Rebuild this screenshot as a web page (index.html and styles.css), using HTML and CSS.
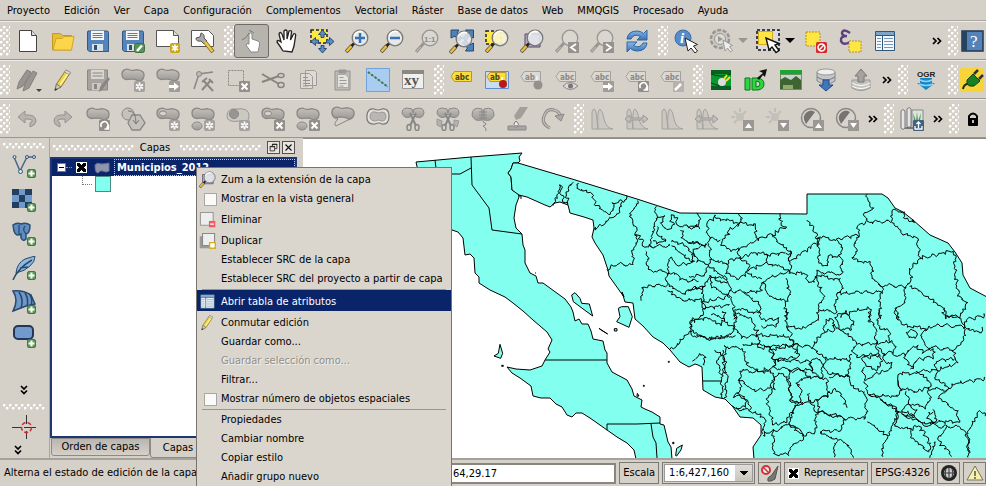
FILE: index.html
```
<!DOCTYPE html>
<html lang="es">
<head>
<meta charset="utf-8">
<title>QGIS</title>
<link rel="stylesheet" href="styles.css">
<script src="boundaries.js" defer></script>
</head>
<body>
<svg class="defs" aria-hidden="true">
  <defs>
    <linearGradient id="shade" x1="0" y1="0" x2="0" y2="1"><stop offset="0" stop-color="#c4c1bc"/><stop offset="1" stop-color="#9d9a96"/></linearGradient>
    <linearGradient id="blue" x1="0" y1="0" x2="0" y2="1"><stop offset="0" stop-color="#8db8e6"/><stop offset="1" stop-color="#3672b5"/></linearGradient>
  </defs>
  <symbol id="blob" viewBox="0 0 24 24"><path d="M1 6C1 1 6 .5 9 2c3 1 5-.5 8-.2 4 .3 6.500 3 6 6-.5 4-3 6-7 4.500C13 10.500 10 11 6 11.500 3 11.500 1 9.500 1 6z" fill="url(#shade)" stroke="#8b8884" stroke-width="1.300"/></symbol>
  <symbol id="b-star" viewBox="0 0 24 24"><rect x="13" y="13" width="11" height="11" rx="2" fill="#a5a29e"/><path d="M18.500 14.500v8M15 16.500l7 4M15 20.500l7-4" stroke="#fff" stroke-width="1.800"/><circle cx="18.500" cy="18.500" r="1" fill="#a5a29e"/></symbol>
  <symbol id="b-x" viewBox="0 0 24 24"><rect x="13" y="13" width="11" height="11" rx="1" fill="#93908c"/><path d="M15.500 15.500l6 6M21.500 15.500l-6 6" stroke="#fff" stroke-width="2"/></symbol>
  <symbol id="b-arrow" viewBox="0 0 24 24"><rect x="13" y="13" width="11" height="11" rx="1" fill="#a09d99"/><path d="M13 17h5v-2.500l5 4-5 4V20h-5z" fill="#fff"/></symbol>
  <symbol id="b-turn" viewBox="0 0 24 24"><rect x="13" y="13" width="11" height="11" rx="1" fill="#908d89"/><path d="M15.500 20a3.500 3.500 0 1 1 5 1M22.500 18v4h-4" fill="none" stroke="#fff" stroke-width="1.600"/></symbol>
  <symbol id="b-plus" viewBox="0 0 24 24"><rect x="15.500" y="15.500" width="8" height="8" rx="1.500" fill="#5c9a57" stroke="#3c7b3c"/><path d="M19.500 16.500v6M16.500 19.500h6" stroke="#fff" stroke-width="2"/></symbol>
  <symbol id="lens" viewBox="0 0 24 24"><path d="M1 23l6-6.500" stroke="#555" stroke-width="4"/><path d="M1.500 22.500l5-5.500" stroke="#f0bf2c" stroke-width="2.500"/><path d="M6.500 17l3-3" stroke="#222" stroke-width="2.500"/><circle cx="15" cy="9" r="7.800" fill="#e9edf0" fill-opacity=".82" stroke="#777" stroke-width="1.300"/><path d="M9 7a6.500 6.500 0 0 1 9-4" fill="none" stroke="#fff" stroke-width="1.500"/></symbol>
  <symbol id="glens" viewBox="0 0 24 24"><path d="M1 23l8-9" stroke="#999692" stroke-width="3"/><path d="M1.500 22.500l4-4.500" stroke="#cbc7c0"/><circle cx="15" cy="9" r="7.800" fill="#dad7d1" stroke="#999692" stroke-width="1.300"/></symbol>
  <symbol id="cursor" viewBox="0 0 24 24"><path d="M11 9l3 13 3-3 4 5 2.500-2-4-5 4-1.500z" fill="#fff" stroke="#222"/></symbol>
  <symbol id="disk" viewBox="0 0 24 24"><path d="M2 2h19a1.500 1.500 0 0 1 1.500 1.500v19H3.500L1.500 21V3z" fill="#5583bb" stroke="#34587f"/><path d="M5 2h13v9H5z" fill="#f6f6f4"/><path d="M6.500 4.500h10M6.500 6.500h10M6.500 8.500h10" stroke="#777"/><path d="M6 15h11v7H6z" fill="#d8e0e8"/><path d="M8 16h3v5H8z" fill="#2b5277"/></symbol>
  <symbol id="gdisk" viewBox="0 0 24 24"><path d="M1.500 2h20v20h-20z" fill="#a7a4a0" stroke="#888"/><path d="M5 2h13v9H5z" fill="#d9d6d0"/><path d="M6.500 5h10M6.500 8h10" stroke="#888"/><path d="M6 15h9v7H6z" fill="#ccc8c2"/><path d="M8 16h3v5H8zM13 24l1-5 8-10 2 2-8 11z" fill="#8a8783"/></symbol>
  <symbol id="tag" viewBox="0 0 24 24"><path d="M1 8.500L4.500 3.500h16v10h-16z" fill="#dcd9d3" stroke="#a4a19d"/></symbol>
  <symbol id="hist" viewBox="0 0 24 24"><path d="M2 22V5q2-6 4 0l2 17zM8 22q-1-20 2-20 3 2 4 10 2 9 9 10z" fill="#cbc8c2" stroke="#a5a29e"/></symbol>
  <symbol id="scis" viewBox="0 0 24 24"><path d="M11 2Q1-1 1 6q2 6 8 4l3-3 3 3q7 2 8-4 0-7-10-4l-1 4z" fill="url(#shade)" stroke="#888"/><path d="M9 6l6 13M15 6L9 19" stroke="#888" stroke-width="2"/><ellipse cx="8" cy="20.500" rx="2" ry="3" fill="none" stroke="#888" stroke-width="1.500"/><ellipse cx="16" cy="20.500" rx="2" ry="3" fill="none" stroke="#888" stroke-width="1.500"/></symbol>
  <symbol id="table" viewBox="0 0 24 24"><path d="M2.500 2.500h19v19h-19z" fill="#f6f9fb" stroke="#31577c"/><path d="M3 3h18v3H3z" fill="#7ea4c9"/><path d="M3 6.500h18M9.500 6v15" stroke="#31577c"/><path d="M4 9.500h4M4 12.500h4M4 15.500h4M4 18.500h4M11 9.500h9M11 12.500h9M11 15.500h9M11 18.500h9" stroke="#7397b8"/></symbol>
  <symbol id="pencil" viewBox="0 0 24 24"><path d="M4 22l1.500-6L15 2l4.500 2.500L10 19z" fill="#ecd445" stroke="#8c7a28"/><path d="M9 17l9-13" stroke="#fff4a0" stroke-width="1.500"/><path d="M15 2l4.500 2.500-1.500 2-4.500-2.500z" fill="#ddd" stroke="#999"/><path d="M4 22l1.500-6L10 19z" fill="#d5ccb5" stroke="#777"/><path d="M3.500 23l1-3 2 1.500z" fill="#333"/></symbol>
  <symbol id="chev" viewBox="0 0 10 8"><path d="M1 1l3 3-3 3M5.500 1l3 3-3 3" fill="none" stroke="#000" stroke-width="1.700"/></symbol>
</svg>

<nav class="menubar" aria-label="Menú principal">
  <button>Proyecto</button><button>Edición</button><button>Ver</button><button>Capa</button><button>Configuración</button><button>Complementos</button><button>Vectorial</button><button>Ráster</button><button>Base de datos</button><button>Web</button><button>MMQGIS</button><button>Procesado</button><button>Ayuda</button>
</nav>

<div class="toolbar">
  <span class="grip"></span>
  <div class="group">
    <button class="tool" aria-label="Nuevo"><svg viewBox="0 0 24 24"><path d="M3.500 1.500h12l5 5v16h-17z" fill="#fff" stroke="#444"/><path d="M15.500 1.500v5h5" fill="#ddd" stroke="#444"/></svg></button>
    <button class="tool" aria-label="Abrir"><svg viewBox="0 0 24 24"><path d="M1.500 21V4.500h8l2 2h9V21z" fill="#e9bd36" stroke="#c79820"/><path d="M2 21L5 9.500h6l2-2h10L20.500 21z" fill="#fbd64b" stroke="#d4a52b"/></svg></button>
    <button class="tool" aria-label="Guardar"><svg viewBox="0 0 24 24"><use href="#disk"/></svg></button>
    <button class="tool" aria-label="Guardar como"><svg viewBox="0 0 24 24"><use href="#disk"/><rect x="13.500" y="14.500" width="10" height="9" rx="2" fill="#559457" stroke="#387139"/><path d="M16 22l5-5.500" stroke="#fff" stroke-width="2.500"/></svg></button>
    <button class="tool" aria-label="Nuevo diseñador"><svg viewBox="0 0 24 24"><path d="M.5 1.500h17l5 5v11H.5z" fill="#fff" stroke="#555"/><path d="M17.500 1.500v5h5" fill="#ddd" stroke="#555"/><rect x="14" y="14" width="10" height="10" rx="2" fill="#d0a313"/><path d="M19 15.500v7M16 17l6 4M16 21l6-4" stroke="#fff" stroke-width="1.700"/></svg></button>
    <button class="tool" aria-label="Administrador de diseñadores"><svg viewBox="0 0 24 24"><path d="M.5 1.500h17l5 5v11H.5z" fill="#fff" stroke="#555"/><path d="M10 4l-1 4-4 1q0 4 5 3l3 3 3-3-3-3q1-4-3-5z" fill="#aaa" stroke="#555"/><path d="M14 13l8 10" stroke="#80651f" stroke-width="4"/><path d="M14 13l7.500 9.500" stroke="#efc84b" stroke-width="2.500"/></svg></button>
  </div>
  <span class="grip"></span>
  <div class="group">
    <button class="tool active" aria-label="Desplazar táctil"><svg viewBox="0 0 24 24"><path d="M9 12V5q1.500-2 3 0v5l6 2q2 1 1.500 4L18 23h-7l-5-7q0-2 3-1z" fill="#fff" stroke="#888"/><path d="M2 11q5-2 7-7m0-3l5 3" fill="none" stroke="#777"/></svg></button>
    <button class="tool" aria-label="Desplazar mapa"><svg viewBox="0 0 24 24"><path d="M8 22q-3-5-6-9 0-3 4 0L4 5q1-3 3 0l2 6V2q2-2 3 0v8l2-8q3-1 2.500 1L15.500 11l3-6q2-1 2.200 1L19 17l-2 6z" fill="#fff" stroke="#222" stroke-width="1.300"/></svg></button>
    <button class="tool" aria-label="Desplazar a selección"><svg viewBox="0 0 24 24"><path d="M1 1h16v13H1z" fill="#ffe743" stroke="#222" stroke-width="1.500" stroke-dasharray="3 2"/><g fill="#5b8dc5" stroke="#294d78"><path d="M12.500 1l4 4.500H14v3h-3v-3H8.500zM12.500 24l4-4.500H14v-3h-3v3H8.500zM1 12.500l4.500-4V11h3v3h-3v2.500zM24 12.500l-4.500-4V11h-3v3h3v2.500z"/></g></svg></button>
    <button class="tool" aria-label="Acercar"><svg viewBox="0 0 24 24"><use href="#lens"/><path d="M15 4v10M10 9h10" stroke="#3972b1" stroke-width="2.500"/></svg></button>
    <button class="tool" aria-label="Alejar"><svg viewBox="0 0 24 24"><use href="#lens"/><path d="M10 9h10" stroke="#3972b1" stroke-width="2.500"/></svg></button>
    <button class="tool" aria-label="Zum nativo"><svg viewBox="0 0 24 24"><use href="#glens"/><text x="9" y="12.500" class="ratio">1:1</text></svg></button>
    <button class="tool" aria-label="Zum general"><svg viewBox="0 0 24 24"><path d="M1 1h8L7 4l5 5-3 3-4-5-4 2zM23.500 1h-8l2 3-5 5 3 3 4-5 4 2zM23.500 22h-8l2-3-5-5 3-3 4 5 4-2z" fill="#4d82bd" stroke="#234a75"/><use href="#lens" x="-1" y="1"/></svg></button>
    <button class="tool" aria-label="Zum a la selección"><svg viewBox="0 0 24 24"><path d="M1 2h15v13H1z" fill="#ffe743" stroke="#222" stroke-width="1.500" stroke-dasharray="3 2"/><use href="#lens"/><circle cx="15" cy="9" r="6" fill="#fff9b8" opacity=".7"/></svg></button>
    <button class="tool" aria-label="Zum a la capa"><svg viewBox="0 0 24 24"><path d="M5 5h15v13H5z" fill="#b6acc6" stroke="#544869"/><use href="#lens"/></svg></button>
    <button class="tool" aria-label="Zum anterior"><svg viewBox="0 0 24 24"><use href="#glens"/><path d="M13 13h11v11H13z" fill="#96938f"/><path d="M21 15l-5 3.500 5 3.500" fill="none" stroke="#fff" stroke-width="1.800"/></svg></button>
    <button class="tool" aria-label="Zum siguiente"><svg viewBox="0 0 24 24"><use href="#glens"/><path d="M13 13h11v11H13z" fill="#96938f"/><path d="M16 15l5 3.500-5 3.500" fill="none" stroke="#fff" stroke-width="1.800"/></svg></button>
    <button class="tool" aria-label="Actualizar"><svg viewBox="0 0 24 24"><path d="M2 10Q3 2 12 2q4 0 6.500 2.500L22 1v10H12l3.500-3.500Q9 4 6 10z" fill="url(#blue)" stroke="#2c66a6"/><path d="M22 14q-1 8-10 8-4 0-6.500-2.500L2 23V13h10l-3.500 3.500Q15 20 18 14z" fill="url(#blue)" stroke="#2c66a6"/></svg></button>
  </div>
  <span class="grip"></span>
  <div class="group">
    <button class="tool" aria-label="Identificar objetos"><svg viewBox="0 0 24 24"><circle cx="9" cy="9" r="8" fill="#568cc9" stroke="#396ca5"/><text x="6" y="14" class="info">i</text><use href="#cursor"/></svg></button>
    <button class="tool" aria-label="Ejecutar acción"><svg viewBox="0 0 24 24"><circle cx="11" cy="10" r="9" fill="#ccc9c3" stroke="#999692" stroke-width="2.500" stroke-dasharray="4 1.600"/><circle cx="11" cy="10" r="5.500" fill="#dedbd5" stroke="#999692"/><path d="M9 7l5 3-5 3z" fill="#999"/><path d="M14 11l2 11 2.500-3 3 4 2-1.500-3-4 3-1z" fill="#eee" stroke="#999"/></svg></button>
    <span class="drop muted"></span>
    <button class="tool" aria-label="Seleccionar objetos"><svg viewBox="0 0 24 24"><path d="M1 1h22v20H1z" fill="#d9dce3" stroke="#111" stroke-width="1.500" stroke-dasharray="3 2"/><path d="M2.500 2.500h14v13h-14z" fill="#ffe743" stroke="#d3aa22"/><path d="M10 9l3 12 3-3 4 5.500 3-2-4-5.500 4-1.500z" fill="#fff" stroke="#111" stroke-width="1.400"/></svg></button>
    <span class="drop"></span>
    <button class="tool" aria-label="Deseleccionar"><svg viewBox="0 0 24 24"><path d="M3 3h14v14H3z" fill="#ffe743" stroke="#b8901c" stroke-dasharray="2 1"/><rect x="13" y="13" width="11" height="11" rx="1.500" fill="#d8282b"/><circle cx="18.500" cy="18.500" r="3.500" fill="none" stroke="#fff" stroke-width="1.500"/><path d="M16 21l5-5" stroke="#fff" stroke-width="1.500"/></svg></button>
    <button class="tool" aria-label="Seleccionar por expresión"><svg viewBox="0 0 24 24"><path d="M12 4Q5-1 4 4q0 3 5 3-7 0-6 5 2 5 9 1" fill="none" stroke="#614080" stroke-width="2.500"/><path d="M11 12h12v11H11z" fill="#ffe743" stroke="#b8901c" stroke-dasharray="2 1"/></svg></button>
    <button class="tool" aria-label="Tabla de atributos"><svg viewBox="0 0 24 24"><use href="#table"/></svg></button>
  </div>
  <div class="group end">
    <button class="more" aria-label="Más"><svg viewBox="0 0 10 8"><use href="#chev"/></svg></button>
    <span class="grip"></span>
    <button class="tool edge" aria-label="Ayuda"><svg viewBox="0 0 24 24"><path d="M2 2h21v20H2z" fill="#5583b8" stroke="#20364e" stroke-width="1.500"/><path d="M2 2h5v20H2z" fill="#26435f"/><text x="10" y="18" class="qmark">?</text></svg></button>
  </div>
</div>

<div class="toolbar">
  <span class="grip"></span>
  <div class="group">
    <button class="tool" aria-label="Ediciones actuales"><svg viewBox="0 0 24 24"><path d="M1 21l2-7L11 2l4 2-8 14zM7 23l2-7L17 3l4 2-8 15z" fill="#999692" stroke="#83807c"/><path d="M20 21h6l-3 3z" fill="#444"/></svg></button>
    <button class="tool" aria-label="Conmutar edición"><svg viewBox="0 0 24 24"><use href="#pencil"/></svg></button>
    <button class="tool" aria-label="Guardar cambios"><svg viewBox="0 0 24 24"><use href="#gdisk"/></svg></button>
    <button class="tool" aria-label="Añadir objeto"><svg viewBox="0 0 24 24"><use href="#blob"/><use href="#b-star"/></svg></button>
    <button class="tool" aria-label="Mover objeto"><svg viewBox="0 0 24 24"><use href="#blob"/><use href="#b-arrow"/></svg></button>
    <button class="tool" aria-label="Herramienta de nodos"><svg viewBox="0 0 24 24"><path d="M3 21L8 6l14-2" fill="none" stroke="#888" stroke-width="1.500"/><circle cx="8" cy="6" r="2.500" fill="#bbb" stroke="#888"/><path d="M11 22l9-10M12 12l10 11M11 14l5-4M18 11l4 4" stroke="#8b8884" stroke-width="2"/></svg></button>
    <button class="tool" aria-label="Borrar lo seleccionado"><svg viewBox="0 0 24 24"><path d="M2.500 2.500h15v15h-15z" fill="none" stroke="#8b8884" stroke-dasharray="2 1"/><use href="#b-x"/></svg></button>
    <button class="tool" aria-label="Cortar"><svg viewBox="0 0 24 24"><path d="M1 6l17 10M1 14l17-6" stroke="#888580" stroke-width="2"/><ellipse cx="20" cy="7.500" rx="3" ry="2" fill="none" stroke="#888580" stroke-width="1.500"/><ellipse cx="20" cy="17" rx="3" ry="2.500" fill="none" stroke="#888580" stroke-width="1.500"/></svg></button>
    <button class="tool" aria-label="Copiar"><svg viewBox="0 0 24 24"><path d="M9.500 2.500h9l2 2v13h-11zM4.500 5.500h9l3 3v12h-12z" fill="#dedbd5" stroke="#a09d99"/><path d="M7 9.500h5M7 12.500h7M7 15.500h7M7 18h5" stroke="#96938f"/></svg></button>
    <button class="tool" aria-label="Pegar"><svg viewBox="0 0 24 24"><path d="M4 3h15v19H4z" fill="#bdb9b3" stroke="#96938f"/><path d="M6.500 6.500h8l3 3v10h-11z" fill="#e6e3dd" stroke="#aaa"/><path d="M8 2h7v3H8zM8.500 9.500h4M8.500 12.500h7M8.500 15.500h7M8.500 18h4" fill="#999" stroke="#999"/></svg></button>
    <button class="tool" aria-label="Digitalizar"><svg viewBox="0 0 24 24"><path d="M.5.5h23v23H.5z" fill="#a9ccf0" stroke="#6fa2d8"/><path d="M2 4l20 15" stroke="#28722c" stroke-width="2" stroke-dasharray="2 2.200"/><path d="M2 4l20 15" stroke="#54805d" stroke-width=".7"/></svg></button>
    <button class="tool" aria-label="Coordenadas XY"><svg viewBox="0 0 24 24"><path d="M1.500 2.500h21v18h-21z" fill="#f0efec" stroke="#999"/><path d="M1 2h22v4H1z" fill="#8b8884"/><text x="3" y="17" class="xy">xy</text></svg></button>
  </div>
  <span class="grip"></span>
  <div class="group">
    <button class="tool" aria-label="Etiquetado"><svg viewBox="0 0 24 24"><path d="M1 8.500L4.500 3.500h17v10h-17z" fill="#fbdc38" stroke="#b9962b"/><text x="5" y="11.500" class="abc dark">abc</text></svg></button>
    <button class="tool" aria-label="Fijar etiquetas"><svg viewBox="0 0 24 24"><path d="M.5 3.500h23v17H.5z" fill="#cbdced" stroke="#5b90d0"/><path d="M2 8.500L5 4.500h16v9H5z" fill="#fbdc38" stroke="#b9962b"/><text x="5" y="12" class="abc dark">ab</text><path d="M17 9v8" stroke="#fff" stroke-width="2"/><circle cx="18" cy="16" r="4" fill="#b9191c"/></svg></button>
    <button class="tool" aria-label="Resaltar etiquetas"><svg viewBox="0 0 24 24"><use href="#tag"/><text x="5" y="11.500" class="abc">ab</text><path d="M17 8v8" stroke="#eee" stroke-width="2"/><circle cx="18" cy="17" r="4.500" fill="#94918d"/></svg></button>
    <button class="tool" aria-label="Mostrar etiquetas"><svg viewBox="0 0 24 24"><use href="#tag"/><text x="5" y="11.500" class="abc">abc</text><path d="M8 18q7-7 15 0-8 7-15 0z" fill="#dedbd5" stroke="#888"/><circle cx="15.500" cy="18" r="2.500" fill="#777"/></svg></button>
    <button class="tool" aria-label="Mover etiqueta"><svg viewBox="0 0 24 24"><use href="#tag"/><text x="5" y="11.500" class="abc">abc</text><use href="#b-arrow"/></svg></button>
    <button class="tool" aria-label="Rotar etiqueta"><svg viewBox="0 0 24 24"><use href="#tag"/><text x="5" y="11.500" class="abc">abc</text><use href="#b-turn"/></svg></button>
    <button class="tool" aria-label="Cambiar etiqueta"><svg viewBox="0 0 24 24"><use href="#tag"/><text x="5" y="11.500" class="abc">abc</text><path d="M13 13h11v11H13z" fill="#b5b2ad"/><path d="M15 22l6-6" stroke="#fff" stroke-width="2.500"/></svg></button>
  </div>
  <span class="grip"></span>
  <div class="group">
    <button class="tool" aria-label="Conector"><svg viewBox="0 0 24 24"><path d="M2 2h20v20H2z" fill="#079a2d"/><path d="M2 2h20v4H2zM2 18h20v4H2z" fill="#075f20"/><path d="M2 6q10 4 20 0M2 15l9 3" stroke="#0b3d16" fill="none"/><circle cx="13" cy="14" r="4" fill="#ddd"/><path d="M15 11l3-4M17 13l4-4" stroke="#ffde29" stroke-width="2"/></svg></button>
    <button class="tool" aria-label="Buscar ID"><svg viewBox="0 0 24 24"><path d="M1 10h5v12H1zM8 10h6q6 1 6 6t-6 6H8zM12 13v6q4 0 4-3t-4-3z" fill="#2ed63e" stroke="#08771e" fill-rule="evenodd"/><path d="M13 10l6-5-4-2 8-2-2 8-2-2-4 5z" fill="#111"/></svg></button>
    <button class="tool" aria-label="Fotografías"><svg viewBox="0 0 24 24"><path d="M1 2h22v20H1z" fill="#6c9160"/><path d="M1 2h22v4H1z" fill="#17a634"/><path d="M2 7h20v5H2z" fill="#c6d3d5"/><path d="M1 12l5-3 6 3 5-4 5 4v9H1z" fill="#3e6432"/><path d="M4 17h10v4H4z" fill="#91ab6e"/></svg></button>
    <button class="tool" aria-label="Importar base"><svg viewBox="0 0 24 24"><path d="M3 4v9q9 6 18 0V4z" fill="#c4c5c8" stroke="#888"/><path d="M3 9q9 6 18 0" fill="none" stroke="#777"/><ellipse cx="12" cy="4" rx="9" ry="3" fill="#eee" stroke="#999"/><path d="M9 12h6v5h4l-7 6-7-6h4z" fill="#4077ba" stroke="#234c81"/></svg></button>
    <button class="tool" aria-label="Exportar base"><svg viewBox="0 0 24 24"><path d="M3 12v8q9 5 18 0v-8z" fill="#c5c2bc" stroke="#999"/><path d="M3 15q9 5 18 0M3 18q9 5 18 0" fill="none" stroke="#fff"/><path d="M9 14V8H6l6-7 6 7h-3v6z" fill="#a6a39f" stroke="#777"/></svg></button>
  </div>
  <button class="more" aria-label="Más"><svg viewBox="0 0 10 8"><use href="#chev"/></svg></button>
  <span class="grip"></span>
  <div class="group">
    <button class="tool" aria-label="OGR"><svg viewBox="0 0 24 24"><text x="3" y="9" class="ogr">OGR</text><path d="M6 10h12v5h3l-9 7-9-7h3z" fill="#1686c4"/><path d="M6 12q6 3 12 0M5 16q7 3 14 0" stroke="#8ed2f5" fill="none" stroke-width="1.500"/></svg></button>
  </div>
  <div class="group end">
    <span class="grip"></span>
    <button class="tool edge" aria-label="Complemento"><svg viewBox="0 0 24 24"><rect width="24" height="24" rx="2" fill="#f7d43a"/><path d="M3 21q1-5 5-5" fill="none" stroke="#182c17" stroke-width="2"/><path d="M7 12l6-6 7 7-6 5q-5 1-7-2z" fill="#168022" stroke="#103f16"/><path d="M14 6l4-4M19 11l4-4" stroke="#333" stroke-width="2.500"/></svg></button>
  </div>
</div>

<div class="toolbar">
  <span class="grip"></span>
  <div class="group">
    <button class="tool" aria-label="Deshacer"><svg viewBox="0 0 24 24"><path d="M2 10l7-6v4q11-1 11 6 0 4-6 6v-4q3-1 2-3-1-1-7-1v4z" fill="#b8b5b0" stroke="#96938f"/></svg></button>
    <button class="tool" aria-label="Rehacer"><svg viewBox="0 0 24 24"><path d="M21 10l-7-6v4Q3 7 3 14q0 4 6 6v-4q-3-1-2-3 1-1 7-1v4z" fill="#b8b5b0" stroke="#96938f"/></svg></button>
    <button class="tool" aria-label="Rotar objetos"><svg viewBox="0 0 24 24"><use href="#blob"/><use href="#b-turn"/></svg></button>
    <button class="tool" aria-label="Simplificar objeto"><svg viewBox="0 0 24 24"><circle cx="7" cy="7" r="6" fill="#c5c2bc" stroke="#8b8884"/><path d="M11 8h8l5 8-5 7h-8l-4-7z" fill="#c5c2bc" stroke="#8b8884" stroke-width="1.300"/><path d="M7 4q8-1 8 12m-3-3l3 4 3-4" stroke="#777" fill="none"/></svg></button>
    <button class="tool" aria-label="Añadir anillo"><svg viewBox="0 0 24 24"><use href="#blob"/><ellipse cx="7" cy="6.500" rx="3.500" ry="2.500" fill="#d5d0c8" stroke="#888"/><use href="#b-star"/></svg></button>
    <button class="tool" aria-label="Añadir parte"><svg viewBox="0 0 24 24"><use href="#blob"/><ellipse cx="6" cy="19" rx="5" ry="4" fill="url(#shade)" stroke="#888"/><use href="#b-star"/></svg></button>
    <button class="tool" aria-label="Rellenar anillo"><svg viewBox="0 0 24 24"><path d="M1 9Q1 1 10 2q14-2 13 8-1 7-9 4-13 2-13-5z" fill="#cbc8c2" stroke="#999"/><circle cx="8" cy="7" r="4.500" fill="#999692" stroke="#888"/><use href="#b-star"/></svg></button>
    <button class="tool" aria-label="Borrar anillo"><svg viewBox="0 0 24 24"><use href="#blob"/><ellipse cx="7" cy="6.500" rx="3.500" ry="2.500" fill="#d5d0c8" stroke="#888"/><use href="#b-x"/></svg></button>
    <button class="tool" aria-label="Borrar parte"><svg viewBox="0 0 24 24"><use href="#blob"/><ellipse cx="6" cy="19" rx="5" ry="4" fill="url(#shade)" stroke="#888"/><use href="#b-x"/></svg></button>
    <button class="tool" aria-label="Remodelar objetos"><svg viewBox="0 0 24 24"><path d="M1 5q3-5 8-2 12-3 14 3 0 6-6 7L5 19q-3-2 2-7-6 0-6-7z" fill="#d5d0c8" stroke="#888"/><use href="#blob" y="-1"/></svg></button>
    <button class="tool" aria-label="Desplazar curva"><svg viewBox="0 0 24 24"><path d="M1 8q1-7 7-6 4 2 8 0 7-1 7 7 0 9-7 8-3-2-7 0-9 1-8-9z" fill="#e3e0da" stroke="#777" stroke-width="1.200"/><path d="M4 9q1-5 5-4 4 2 7 0 4 0 4 4 0 5-4 5-4-2-7 0-5 0-5-5z" fill="#bab7b2" stroke="#999"/></svg></button>
    <button class="tool" aria-label="Dividir objetos"><svg viewBox="0 0 24 24"><use href="#scis"/></svg></button>
    <button class="tool" aria-label="Dividir partes"><svg viewBox="0 0 24 24"><use href="#scis"/><path d="M1 12l5 2-1 6-4-2zM18 13l5 1-2 6-3-2z" fill="#b5b2ad" stroke="#999"/></svg></button>
    <button class="tool" aria-label="Combinar objetos"><svg viewBox="0 0 24 24"><path d="M11 2Q1-1 1 8q2 7 10 5zM13 2q10-3 10 6-2 7-10 5z" fill="url(#shade)" stroke="#888"/><path d="M8 5h8M8 8h8M8 11h8M12 3v12q6 2 0 4 4 2 3 5" fill="none" stroke="#888"/></svg></button>
    <button class="tool" aria-label="Combinar atributos"><svg viewBox="0 0 24 24"><path d="M10 13L8 9l6-9h8l-7 11z" fill="#a29f9b"/><path d="M10 14q5 5 0 5-4-1 0-5z" fill="#eee" stroke="#777"/><path d="M2 19h5q3 3 6 0h7v4H2z" fill="#aaa7a2" stroke="#888"/></svg></button>
    <button class="tool" aria-label="Rotar símbolos"><svg viewBox="0 0 24 24"><path d="M9 21Q0 17 3 9 6 1 13 3q5 1 7 7" fill="none" stroke="#888" stroke-width="3"/><path d="M9 21Q0 17 3 9 6 1 13 3q5 1 7 7" fill="none" stroke="#c3c0ba" stroke-width="1.300"/><path d="M14 9l9-2-3 7z" fill="#aaa" stroke="#888"/></svg></button>
  </div>
  <span class="grip"></span>
  <div class="group">
    <button class="tool" aria-label="Estirar local"><svg viewBox="0 0 24 24"><use href="#hist"/></svg></button>
    <button class="tool" aria-label="Estirar histograma"><svg viewBox="0 0 24 24"><use href="#hist"/><path d="M0 12l5-4v3h13V8l5 4-5 4v-3H5v3z" fill="#c3c0ba" stroke="#999"/></svg></button>
    <button class="tool" aria-label="Estirar local acumulado"><svg viewBox="0 0 24 24"><use href="#hist"/></svg></button>
    <button class="tool" aria-label="Estirar acumulado"><svg viewBox="0 0 24 24"><use href="#hist"/><path d="M0 12l5-4v3h13V8l5 4-5 4v-3H5v3z" fill="#c3c0ba" stroke="#999"/></svg></button>
    <button class="tool" aria-label="Aumentar brillo"><svg viewBox="0 0 24 24"><circle cx="10" cy="10" r="4" fill="#c3c0ba"/><path d="M10 1v4M1 10h4M4 4l3 3M16 4l-3 3M4 16l3-3" stroke="#c0bdb7" stroke-width="2"/><path d="M13 13h11v11H13z" fill="#9b9894"/><path d="M15 21l3.500-5 3.500 5z" fill="#fff"/></svg></button>
    <button class="tool" aria-label="Reducir brillo"><svg viewBox="0 0 24 24"><circle cx="10" cy="10" r="4" fill="#c3c0ba"/><path d="M10 1v4M1 10h4M4 4l3 3M16 4l-3 3M4 16l3-3" stroke="#c0bdb7" stroke-width="2"/><path d="M13 13h11v11H13z" fill="#9b9894"/><path d="M15 16l3.500 5 3.500-5z" fill="#fff"/></svg></button>
    <button class="tool" aria-label="Aumentar contraste"><svg viewBox="0 0 24 24"><circle cx="11" cy="11" r="9.500" fill="#d7d4ce" stroke="#8b8884" stroke-width="1.500"/><path d="M6 17Q1 9 7 5q4-3 8 0z" fill="#777470"/><path d="M13 13h11v11H13z" fill="#9b9894"/><path d="M15 21l3.500-5 3.500 5z" fill="#fff"/></svg></button>
    <button class="tool" aria-label="Reducir contraste"><svg viewBox="0 0 24 24"><circle cx="11" cy="11" r="9.500" fill="#d7d4ce" stroke="#8b8884" stroke-width="1.500"/><path d="M6 17Q1 9 7 5q4-3 8 0z" fill="#777470"/><path d="M13 13h11v11H13z" fill="#9b9894"/><path d="M15 16l3.500 5 3.500-5z" fill="#fff"/></svg></button>
  </div>
  <button class="more" aria-label="Más"><svg viewBox="0 0 10 8"><use href="#chev"/></svg></button>
  <span class="grip"></span>
  <div class="group">
    <button class="tool" aria-label="GRASS"><svg viewBox="0 0 24 24"><path d="M12 3h11v18H12z" fill="#dde5dd" stroke="#888"/><path d="M14 14l-1-8 3 8 1-9 1 9 3-8-1 8z" fill="#4a9a51"/><path d="M1 4q2-3 4 0v17q-2 3-4 0zM7 2q2-3 4 0v17q-2 3-4 0z" fill="#e5e5e5" stroke="#777"/><path d="M5 21h8" stroke="#777" stroke-width="2"/><rect x="13" y="13" width="11" height="11" rx="1" fill="#3f6380"/><path d="M18.500 21v-6m-2 2l2-2 2 2M15 19v3h7v-3" fill="none" stroke="#fff" stroke-width="1.300"/></svg></button>
  </div>
  <div class="group end">
    <button class="more" aria-label="Más"><svg viewBox="0 0 10 8"><use href="#chev"/></svg></button>
    <span class="grip"></span>
    <button class="tool edge" aria-label="Bloquear"><svg viewBox="0 0 24 24"><path d="M8 12V9q4-5 8 0v3" fill="none" stroke="#000" stroke-width="2"/><rect x="7" y="11" width="10" height="8" rx="1"/><path d="M12 13v3" stroke="#fff" stroke-width="1.500"/></svg></button>
  </div>
</div>

<main class="workspace">
  <aside class="side">
    <span class="hgrip"></span>
    <button class="add" aria-label="Añadir capa vectorial"><svg viewBox="0 0 24 24"><path d="M2 3l6 14L15 3h7" fill="none" stroke="#46678c" stroke-width="1.500"/><g fill="#dce5ee" stroke="#31577c"><circle cx="2.500" cy="3" r="1.500"/><circle cx="8.500" cy="17.500" r="2"/><circle cx="15" cy="3" r="1.500"/><circle cx="22" cy="3" r="1.500"/></g><use href="#b-plus"/></svg></button>
    <button class="add" aria-label="Añadir capa ráster"><svg viewBox="0 0 24 24"><path d="M0 1h20v19H0z" fill="#6f9bcb"/><path d="M0 1h7v6H0zM13 1h7v6h-7zM7 7h6v7H7zM0 14h7v6H0zM13 14h7v6h-7z" fill="#223f60"/><use href="#b-plus"/></svg></button>
    <button class="add" aria-label="Añadir capa PostGIS"><svg viewBox="0 0 24 24"><path d="M1 3q4-3 8-1 5-2 9 1 0 8-4 9v5q-3 3-5-1v-4q-5 3-7-3z" fill="#608dc0" stroke="#294e78" stroke-width="1.500"/><path d="M7 3v9M13 4q-3 4 1 8" fill="none" stroke="#294e78" stroke-width="1.300"/><use href="#b-plus"/></svg></button>
    <button class="add" aria-label="Añadir capa SpatiaLite"><svg viewBox="0 0 24 24"><path d="M4 17Q5 7 13 3l10-3q0 6-5 10-5 5-14 7z" fill="#8fb8df" stroke="#29496c"/><path d="M1 24Q6 12 20 4M8 12l8-1" fill="none" stroke="#29496c" stroke-width="1.500"/><use href="#b-plus"/></svg></button>
    <button class="add" aria-label="Añadir capa MSSQL"><svg viewBox="0 0 24 24"><path d="M1 1q10-1 18 4l4 9-9 2-13 5q6-11 0-20z" fill="#6d98c9" stroke="#28486c" stroke-width="1.500"/><path d="M7 2q5 8 2 16M13 3q4 6 2 13M18 5q3 5 1 10" fill="none" stroke="#28486c" stroke-width="1.500"/><use href="#b-plus"/></svg></button>
    <button class="add" aria-label="Añadir capa Oracle"><svg viewBox="0 0 24 24"><rect x="2" y="2" width="19" height="13" rx="4" fill="#739acc" stroke="#20395b" stroke-width="2"/><use href="#b-plus"/></svg></button>
    <button class="more down" aria-label="Más"><svg viewBox="0 0 10 8"><use href="#chev"/></svg></button>
    <span class="hgrip"></span>
    <button class="add" aria-label="Captura de coordenadas"><svg viewBox="0 0 24 24"><path d="M0 12.500h9M16 12.500h8M14.500 0v9M14.500 16v8M12 12.500h5" stroke="#333"/><circle cx="14.500" cy="12.500" r="5" fill="none" stroke="#c43035" stroke-width="1.500" stroke-dasharray="4 2"/></svg></button>
    <button class="more down last" aria-label="Más"><svg viewBox="0 0 10 8"><use href="#chev"/></svg></button>
  </aside>

  <section class="dock">
    <header class="dock-title">
      <span class="hgrip"></span><span>Capas</span><span class="hgrip"></span>
      <button aria-label="Flotar"><svg viewBox="0 0 12 12"><path d="M4.500 4V1.500h6v6H8M1.500 4.500h6v6h-6z" fill="none" stroke="#111"/><path d="M4 2h7M1 5h7" stroke="#111"/></svg></button>
      <button aria-label="Cerrar"><svg viewBox="0 0 12 12"><path d="M2 2l8 8M10 2l-8 8" stroke="#111" stroke-width="1.500"/></svg></button>
    </header>
    <div class="tree">
      <div class="layer">
        <span class="minus"></span><span class="link"></span>
        <input class="tick" type="checkbox" checked aria-label="Mostrar Municipios_2012">
        <svg class="poly" viewBox="0 0 16 12"><path d="M1 3q2-3 6-1 4 0 8-1v8q-3 2-6 0-3-1-5 2-3 0-3-8z" fill="#8e95ad" stroke="#6a7290"/></svg>
        <span class="layer-name">Municipios_2012</span>
      </div>
      <div class="legend"><span class="elbow"></span><span class="swatch"></span></div>
    </div>
    <div class="tabs"><button>Orden de capas</button><button class="current">Capas</button></div>
  </section>

  <section class="map" aria-label="Mapa">
    <svg viewBox="303 139 683 319" preserveAspectRatio="xMinYMin slice">
      <g class="land">
        <path d="M416 162L471 157 522 153 519 157 520 161 518 163 513 163 511 169 508 173 511 177 512 190 518 193 519 197 516 205 514 218 516 228 522 234 523 245 525 250 525 263 530 273 536 276 538 283 543 283 565 299 571 307 573 312 575 321 579 319 582 324 588 324 591 331 593 339 603 341 605 350 607 353 607 363 612 372 627 380 632 389 634 396 642 400 641 407 645 409 652 412 660 417 660 424 664 425 668 442 671 447 672 459 636 459 634 450 627 443 617 437 607 430 590 418 582 413 576 413 572 417 567 415 562 407 556 404 550 398 541 398 533 396 531 386 520 378 512 373 507 367 516 369 530 370 542 366 545 360 550 352 548 349 552 340 547 332 533 320 523 311 513 303 505 297 490 290 479 283 479 277 475 273 474 258 470 254 465 255 463 238 458 232 452 230 440 210 436 190 420 180z"/>
        <path d="M518 163L572 179 637 199 680 213 807 214 807 194 882 194 888 198 895 208 903 212 913 220 930 235 948 243 955 252 962 263 963 275 970 288 987 297V459H754L753 447 761 435 761 425 753 418 740 417 733 407 725 399 715 397 703 390 702 367 698 365 695 364 689 367 680 362 670 350 663 343 653 337 643 326 635 319 633 303 625 302 622 292 624 297 619 290 609 276 608 270 603 255 595 243 592 237 594 228 593 220 584 217 570 213 568 205 560 202 555 203 550 207 545 205 527 197 519 195 512 190 511 177 508 173 511 169 513 163z"/>
        <g transform="translate(480 290) scale(.3333)"><path d="M275 15l10-7 15 17 5 15 23 2 10 36-38-28-20-15zM415 55l10-5h20l12 30-10 32-37-17 10-15zM60 163l8 27-6 15-20-7 13-8zM587 497l3-22 17-10-4 15-13 18zM357 115l26 17-20-12zM472 310l5 8-6 1zM403 116h8v7h-8zM490 286h3v3h-3zM565 214h3v3h-3zM578 457h4v4h-4zM65 226h5v3h-5z"/></g>
      </g>
      <g class="line">
        <path d="M435 160l1 8M471 157l1 28 17 23 3 22 30 4M451 174h9l11-6M545 360h62M607 430v-6l30 0 23-1M651 424l2 13 3 6 1 15M703 381h19M519 196h2v3M535 273h1"/>
      </g>
      <g class="line municipal">
        <path d="M554 206v-5l6-15 3 14 5 4-2-12 6-10M577 182v6l16 7 2 10 12 9 5-2 1-9 14-3-1-3M621 203l-3 10-21 15-4 2M637 200l-3 8-5 5 6 15 2 7-4 18-1 12-17-1-7 6M637 233l8 14 25-1M656 207v11l-1 9-5 13 1 8M656 218l7-1-1 10 6 3 5-5-2-5 3-6M674 214l5 12 21 2M682 228l1 12 17 5M657 228l2 7 8 5-9 3-5-4M672 247l21 16-15 2-7-8-4 15-19-2-1-20M672 242l11 1 10 10v10M667 272v13l-24 2-3 12M667 272l10 3 3 5 20 1M667 285l16 10 10-7h10M668 290l15 10 19 0 2 15-12 5-1 10-11 12-10 8M703 302l25-5M692 330l15 9 28-3M716 352l6 2-4 9 4 15v20M723 350l0 12 4 16-2 20M693 361l5-6 8 3-2 8"/>
        <g transform="translate(690 180) scale(.3333)" data-unit="3"><path d="M25 102l5 33-30 5M72 102l-2 13-20 15 5 45 35 5M72 112l83 18-5-28M155 130l40 5 5 45-50 28-30 2-30-25 30-25-5-10zM0 185l55 10M55 175l7 60-7 15-35-5-12-35 42-15M62 235l48 20 8-15 32-5-5-27M150 235l25 15-3 30-32 20-30-20v-25M0 290l50-5 5-25 55 30v10l-50-15M275 102l-7 18 17 20-40 25-30 10-15 5M245 165l15 20 40 30v30l80-55M150 235l35-15h47l-7 30-45 20M232 225l68-7M232 248l68 22M300 215v60l-60 15-20 20 15 35 50 20M352 118l28 47 2 25M300 280l45-2 10 30h17l13-33 70 8v-53l-40-2-5 27h-22l-3-85 55 10 15 15-5 35M440 180l65-15-10 35 5 15-10 23 55 12 3 50 22 15 10 20-140 5 20-10-10-30-70-15M530 42l5 23 15 20-25 15 5 28 75-6 3-32 32 5 5 20 23 15v-12M530 128l-25 7v30M605 122l35 43 40 5 10 65-30 35 5 30-15 20-80-5M690 235l90-20 15 5v60l10 65 25 25-20 40h-45M660 320l105 65v30M650 320l-10 50-20 15 5 35M440 340l-5 60-50-15 15-40-20-45v-15M290 300l10 45-15 20 5 55M0 330l40-10 25-30-5 30 60 30v-15h95v-35M40 320l-2 30 7 35 75-10M120 350l10 25 5 45M165 340l45 35-5 25-70-15M570 335v85M500 390l40-5v30M450 410l50-20M120 335l-2-25-43-10M172 280l43 15"/></g>
        <g transform="translate(690 310) scale(.3333)" data-unit="3"><path d="M0 35l45-10 50 18 10-15-5-28M0 35l5 40 50 12 65-10 15-20 3-57M60 15l30 0 15 15M135 5l50 25 20 45-50 10-20-30M205 0l10 30 50-5v20l-50 5M205 75l95 5 15 22-110 12zM290 0l0 50 15 30M290 50l50 5 45-25v-30M300 80l20 50M365 110l40-45-5-25 20-15 15 15-5 20-25 5M435 20l30-15 30 35-15 20-30-5zM430 50l50 25 20 30 60-5 5 30-60 10-20-20 15-15M365 110l40 35 75 5 5-20M315 105l50 5M240 120l80-15 5 35-70 10zM540 0l-5 35 20 15 5 50 50-8 5 30-30 12-20-25M565 0l0 50 30 10 5 35M615 0l20 45 75 10 35-10 80 5 5-20 58-15M765 0l-5 15 45 5M825 50l-5 40-30 30-80-10-20-35 20-20M650 65l20-5 10 20-25 5zM805 20l20 30 40 20 10-15M610 135l30 0 40-30 20 20 30-10v25l-50 10-20 30M640 135l15 25 20 10M790 120l10 40-60 20-5-25 60-10M740 180l-5 25 40 30 20-15 93-15M675 185l65-5M620 205l10-15 60 0 25 15 5 25-40 15-50-10zM520 145l50-10 5 25-15 20-35-15zM580 125l5 30 20 5-10 20-35 10-30 20-10-15v-25M480 150l-5 50-60-10-15-20 5-25M365 150l25-5 10 25-5 30-30-10zM255 150l105 5 5 25-110-5zM160 105l45-5 40 20 10 50-50 15-30-15-15-40M105 110l55 5 5 10M105 110v60l-5 20M150 180l40 5 60 0-5 50-50 5-45-30zM150 200l0 35-20 25 20 0 20 20-15 15-25-5M150 250l25 20 5 30M250 235l5-30 15-15 25 20 10 60 20 10-35 55-40 10-20-80zM295 185l45-5 20 20-40 15 15 35-5 30-25-5zM360 200l50 5 5 50-45 20-15-10 5-20M415 205l30-10 30 5 15 35 35 10 5 80-75 0-70-20 0-35 50-30 25 25 10 30M525 215l10 40 85 5 15-15-10-25M535 255l75 30 15 20-35 75-55-45M570 265l60 40 20-20 30 15-5 15-45-10M650 245l10 35 45 15 15-35-5-25M715 235l55 5M775 235l-30 30 60 45 0 25-80 0-15-20 20-10M730 300l10 30-30 20-75-40M610 345l15-35M635 310l105 40 65 0 20 20 15 30-10 40M770 350l-25 40 40 50M740 395l-20 45M660 360l25-15 35 55-5 30-50-50zM610 345l50 15M835 430l0-65 35-60 18 8M320 285l40-10 20 30-5 60-35 10-45-35zM380 305l55 10 30 15-15 30-60 5M390 365l50 25 30 10 20 40M440 395l-10 45M250 365l50-25 40 25-5 25-35 20-10 25-40-5zM215 375l35-15M135 295l60 10 35 25-15 40M590 380l-5 20-10 40M105 30l30 25"/></g>
      </g>
    </svg>
  </section>
</main>

<footer class="status">
  <span class="hint">Alterna el estado de edición de la capa a</span>
  <input class="coord" type="text" value="64,29.17" aria-label="Coordenada">
  <label class="cell" for="scale">Escala</label>
  <div class="cell combo"><select id="scale"><option>1:6,427,160</option></select></div>
  <button class="cell icon" aria-label="Detener representación"><svg viewBox="0 0 20 20"><path d="M8 18q-1-4 3-5l7-10-3 13q-4 3-7 2z" fill="#777" stroke="#555"/><circle cx="6" cy="7" r="4" fill="#eee" stroke="#ce3337" stroke-width="2"/><path d="M3 4l6 6" stroke="#ce3337" stroke-width="1.500"/></svg></button>
  <label class="cell render"><input class="tick" type="checkbox" checked>Representar</label>
  <button class="cell">EPSG:4326</button>
  <button class="cell icon" aria-label="SRC"><svg viewBox="0 0 20 20"><circle cx="10" cy="10" r="8" fill="#222"/><circle cx="10" cy="10" r="5" fill="#ccc"/><path d="M10 3v14M3 10h14M7 6q-2 4 0 8M13 6q2 4 0 8" stroke="#333" fill="none"/></svg></button>
  <button class="cell icon" aria-label="Mensajes"><svg viewBox="0 0 20 20"><path d="M10 3l8 14H2z" fill="#f7f1ad" stroke="#77745a"/><path d="M10 8v5M10 14v2" stroke="#555" stroke-width="1.500"/></svg></button>
</footer>

<div class="context" role="menu">
  <button class="item tall"><svg viewBox="0 0 24 24"><path d="M5 5h15v13H5z" fill="#b6acc6" stroke="#544869"/><use href="#lens"/></svg>Zum a la extensión de la capa</button>
  <label class="item"><input class="box" type="checkbox">Mostrar en la vista general</label>
  <button class="item tall"><svg viewBox="0 0 24 24"><path d="M2 2h18v18H2z" fill="#eee" stroke="#999" stroke-width="1.500"/><path d="M14 14h9v9h-9z" fill="#f05a60"/><path d="M16 18.500h5" stroke="#fff" stroke-width="2"/></svg>Eliminar</button>
  <button class="item tall"><svg viewBox="0 0 24 24"><path d="M1 6h17v17H1z" fill="#999"/><path d="M5 2h17v17H5z" fill="#eee" stroke="#888" stroke-width="1.500"/><path d="M15 15h8v8h-8z" fill="#fff" stroke="#d8af23" stroke-width="2"/></svg>Duplicar</button>
  <button class="item">Establecer SRC de la capa</button>
  <button class="item">Establecer SRC del proyecto a partir de capa</button>
  <hr>
  <button class="item tall chosen"><svg viewBox="0 0 24 24"><use href="#table"/></svg>Abrir tabla de atributos</button>
  <button class="item tall"><svg viewBox="0 0 24 24"><use href="#pencil"/></svg>Conmutar edición</button>
  <button class="item">Guardar como...</button>
  <button class="item" disabled>Guardar selección como...</button>
  <button class="item">Filtrar...</button>
  <label class="item"><input class="box" type="checkbox">Mostrar número de objetos espaciales</label>
  <hr>
  <button class="item">Propiedades</button>
  <button class="item">Cambiar nombre</button>
  <button class="item">Copiar estilo</button>
  <button class="item">Añadir grupo nuevo</button>
</div>
</body>
</html>
```

FILE: styles.css
```
:root {
  --face: #d5d0c8;
  --navy: #0a246a;
  --edge: #8d8a85;
}
* { box-sizing: border-box; }
body {
  margin: 0;
  height: 100vh;
  display: flex;
  flex-direction: column;
  position: relative;
  overflow: hidden;
  background: var(--face);
  color: #000;
  font: 11px/14px "DejaVu Sans Condensed", "DejaVu Sans", sans-serif;
}
.defs { position: absolute; width: 0; height: 0; }
button, input, select { font: inherit; color: inherit; }
button { background: none; border: 0; padding: 0; margin: 0; }
svg { display: block; }

.menubar {
  display: flex;
  gap: 14px;
  height: 21px;
  flex: none;
  padding: 1px 7px 0;
  border-bottom: 1px solid #aaa69f;
}
.menubar button { white-space: nowrap; }

.toolbar {
  display: flex;
  align-items: center;
  height: 39px;
  flex: none;
  border-top: 1px solid #efede9;
  border-bottom: 1px solid #99958f;
  overflow: hidden;
}
.group { display: flex; align-items: center; flex: none; }
.group + .grip { margin-left: 4px; }
.end { margin-left: auto; }
.tool {
  width: 35px;
  height: 34px;
  flex: none;
  display: grid;
  place-items: center;
  overflow: hidden;
}
.tool svg { width: 24px; height: 24px; overflow: visible; }
.tool.active {
  background: #b7b4ae;
  border: 1px solid #6e6b67;
  border-radius: 3px;
}
.tool.edge { width: 28px; }
.grip {
  width: 10px;
  height: 30px;
  flex: none;
  padding: 0 1px 0 3px;
  background:
    conic-gradient(from 180deg at 2px 2px, transparent 25%, #fbfaf8 0 50%, transparent 0) 0 0 / 6px 6px content-box,
    conic-gradient(from 180deg at 2px 2px, transparent 25%, #fbfaf8 0 50%, transparent 0) 3px 3px / 6px 6px content-box;
  background:
    linear-gradient(90deg, #fbfaf8 2px, var(--face) 2px 3px, transparent 3px),
    none;
  background: radial-gradient(circle at 1px 1px, #fff 1px, transparent 2px) 3px 0 / 6px 6px,
    radial-gradient(circle at 1px 1px, #fff 1px, transparent 2px) 6px 3px / 6px 6px;
}
.more + .grip { margin-left: 2px; }
.hgrip {
  height: 6px;
  background: radial-gradient(circle at 1px 1px, #fff 1px, transparent 2px) 0 0 / 6px 6px,
    radial-gradient(circle at 1px 1px, #fff 1px, transparent 2px) 3px 3px / 6px 6px;
}
.drop {
  width: 10px;
  height: 5px;
  margin-right: 2px;
  background: #000;
  clip-path: polygon(0 0, 100% 0, 50% 100%);
}
.drop.muted { background: #99968f; }
.more {
  width: 18px;
  height: 20px;
  flex: none;
  display: grid;
  place-items: center;
}
.more svg { width: 10px; height: 8px; }
.abc { font: bold 8px "DejaVu Sans Condensed", sans-serif; fill: #8b8884; }
.abc.dark { fill: #4b4117; }
.ratio { font: bold 8px "Liberation Sans", sans-serif; fill: #8b8884; }
.info { font: italic bold 15px "Liberation Serif", serif; fill: #fff; }
.qmark { font: 17px "Liberation Serif", serif; fill: #fff; }
.xy { font: bold 15px "Liberation Serif", serif; fill: #555; }
.ogr { font: bold 8px "Liberation Sans", sans-serif; fill: #222; }

.workspace { display: flex; flex: 1; min-height: 0; }
.side {
  width: 50px;
  flex: none;
  display: flex;
  flex-direction: column;
  align-items: flex-start;
  padding: 5px 3px 2px;
  border-right: 1px solid #aaa69f;
}
.side .hgrip { width: 42px; flex: none; }
.add {
  height: 34px;
  width: 42px;
  flex: none;
  display: grid;
  place-items: center;
}
.add svg { width: 24px; height: 24px; }
.down { width: 42px; transform: rotate(90deg); margin: auto 0 4px; }
.last { width: 30px; height: 12px; margin: 0; }

.dock { width: 253px; flex: none; display: flex; flex-direction: column; }
.dock-title {
  display: flex;
  align-items: center;
  gap: 2px;
  height: 19px;
  flex: none;
  padding: 0 8px 0 3px;
}
.dock-title .hgrip { flex: 1; }
.dock-title span + span { margin: 0 4px; }
.dock-title button {
  width: 13px;
  height: 13px;
  padding: 1px;
  background: #e9e6e0;
  border: 1px solid #55524e;
}
.dock-title button svg { width: 9px; height: 9px; }
.tree {
  flex: 1;
  min-height: 0;
  margin-right: 6px;
  background: #fff;
  border: 2px solid #1f3674;
}
.layer {
  display: flex;
  align-items: center;
  height: 17px;
  background: var(--navy);
  color: #fff;
  padding-left: 5px;
}
.minus {
  width: 9px;
  height: 9px;
  border: 1px solid #777;
  background: linear-gradient(#000, #000) center / 5px 1px no-repeat #fff;
}
.link { width: 6px; border-top: 1px dotted #8792b8; margin-right: 4px; }
.tick {
  appearance: none;
  width: 11px;
  height: 11px;
  margin: 0;
  background:
    linear-gradient(45deg, transparent 38%, #000 38%, #000 62%, transparent 62%),
    linear-gradient(135deg, transparent 38%, #000 38%, #000 62%, transparent 62%) #fff;
  border: 1px solid #fff;
}
.poly { width: 16px; height: 12px; margin: 0 4px 0 7px; }
.layer-name {
  flex: 1;
  height: 17px;
  line-height: 16px;
  border: 1px dotted #e7cf81;
  padding-left: 2px;
  font-weight: bold;
}
.legend { display: flex; padding-left: 30px; }
.elbow {
  width: 10px;
  height: 9px;
  border: dotted #777;
  border-width: 0 0 1px 1px;
}
.swatch {
  width: 16px;
  height: 16px;
  margin-left: 3px;
  background: #82ffee;
  border: 1px solid #4a8d84;
}
.tabs { display: flex; height: 20px; flex: none; align-items: flex-start; padding-left: 1px; }
.tabs button {
  height: 18px;
  width: 99px;
  border: 1px solid var(--edge);
  border-radius: 0 0 3px 3px;
  background: linear-gradient(#bab6af, #d5d0c8);
}
.tabs .current { height: 20px; width: 56px; border-top: 0; background: var(--face); }

.map {
  flex: 1;
  min-width: 0;
  background: #fff;
  border-top: 1px solid var(--edge);
  overflow: hidden;
}
.map > svg { width: 100%; height: 100%; }
.land path, .line path {
  stroke: #000;
  stroke-width: 1px;
  stroke-linejoin: round;
  vector-effect: non-scaling-stroke;
}
.land path { fill: #82ffee; }
.line path { fill: none; }

.status {
  display: flex;
  align-items: center;
  gap: 3px;
  height: 28px;
  flex: none;
  border-top: 2px solid #a5a29c;
}
.hint { width: 442px; padding-left: 4px; white-space: nowrap; flex: none; }
.coord {
  flex: 1;
  min-width: 0;
  height: 21px;
  padding: 0 6px;
  background: #fff;
  border: 2px solid #898680;
}
.cell {
  height: 22px;
  flex: none;
  display: flex;
  align-items: center;
  justify-content: center;
  border: 1px solid #7c7974;
  padding: 0 3px;
}
.cell.icon { width: 23px; padding: 0; }
.cell.icon svg { width: 20px; height: 20px; }
.combo { padding: 1px; }
.combo select {
  appearance: none;
  width: 89px;
  height: 18px;
  padding: 0 4px;
  border: 1px solid #999;
  background:
    conic-gradient(from -45deg at 50% 100%, #000 90deg, transparent 0) right 4px center / 8px 4px no-repeat,
    linear-gradient(#e0ddd7, #c9c5be) right / 17px 100% no-repeat,
    #fff;
}
.render { gap: 5px; }

.context {
  position: absolute;
  left: 196px;
  top: 167px;
  width: 256px;
  padding-bottom: 4px;
  background: #dad6ce;
  border: 1px solid #77746f;
}
.item {
  display: flex;
  align-items: center;
  width: 100%;
  height: 19px;
  padding: 1px 0 0 24px;
  white-space: nowrap;
}
.item.tall { height: 21px; padding-top: 2px; }
.item svg { width: 17px; height: 17px; margin: 0 5px 0 -22px; }
.item:disabled { color: #918e88; text-shadow: 1px 1px #f4f2ee; }
.item.chosen { background: var(--navy); color: #fff; }
.box {
  appearance: none;
  width: 13px;
  height: 13px;
  margin: 0 4px 0 -17px;
  background: #fafaf8;
  border: 1px solid #aaa7a2;
}
.context hr {
  height: 1px;
  margin: 1px 5px 0;
  border: 0;
  background: #999691;
}
```

FILE: boundaries.js
```
// Gives the municipal boundaries an irregular course. The shift depends only
// on the position on the map, so lines that share a vertex still meet there.
function shift(x, y) {
  return [
    1.1 * Math.sin(x * 0.9 + y * 0.5) + 0.9 * Math.sin(y * 1.3 - x * 0.3),
    1.1 * Math.sin(y * 0.8 - x * 0.6 + 2) + 0.9 * Math.sin(x * 1.4 + y * 0.2)
  ];
}

document.querySelectorAll(".municipal path").forEach(function (path) {
  const unit = Number(path.parentNode.dataset.unit || 1);
  const probe = document.createElementNS("http://www.w3.org/2000/svg", "path");
  const lines = path.getAttribute("d").split("M").filter(Boolean);
  const course = lines.map(function (line) {
    probe.setAttribute("d", "M" + line);
    const total = probe.getTotalLength();
    const count = Math.max(1, Math.round(total / unit / 1.5));
    const points = [];
    for (let i = 0; i <= count; i++) {
      const p = probe.getPointAtLength(total * i / count);
      const s = shift(p.x / unit, p.y / unit);
      points.push((p.x + s[0] * unit).toFixed(1) + " " + (p.y + s[1] * unit).toFixed(1));
    }
    return "M" + points.join("L");
  });
  path.setAttribute("d", course.join(""));
});
```
